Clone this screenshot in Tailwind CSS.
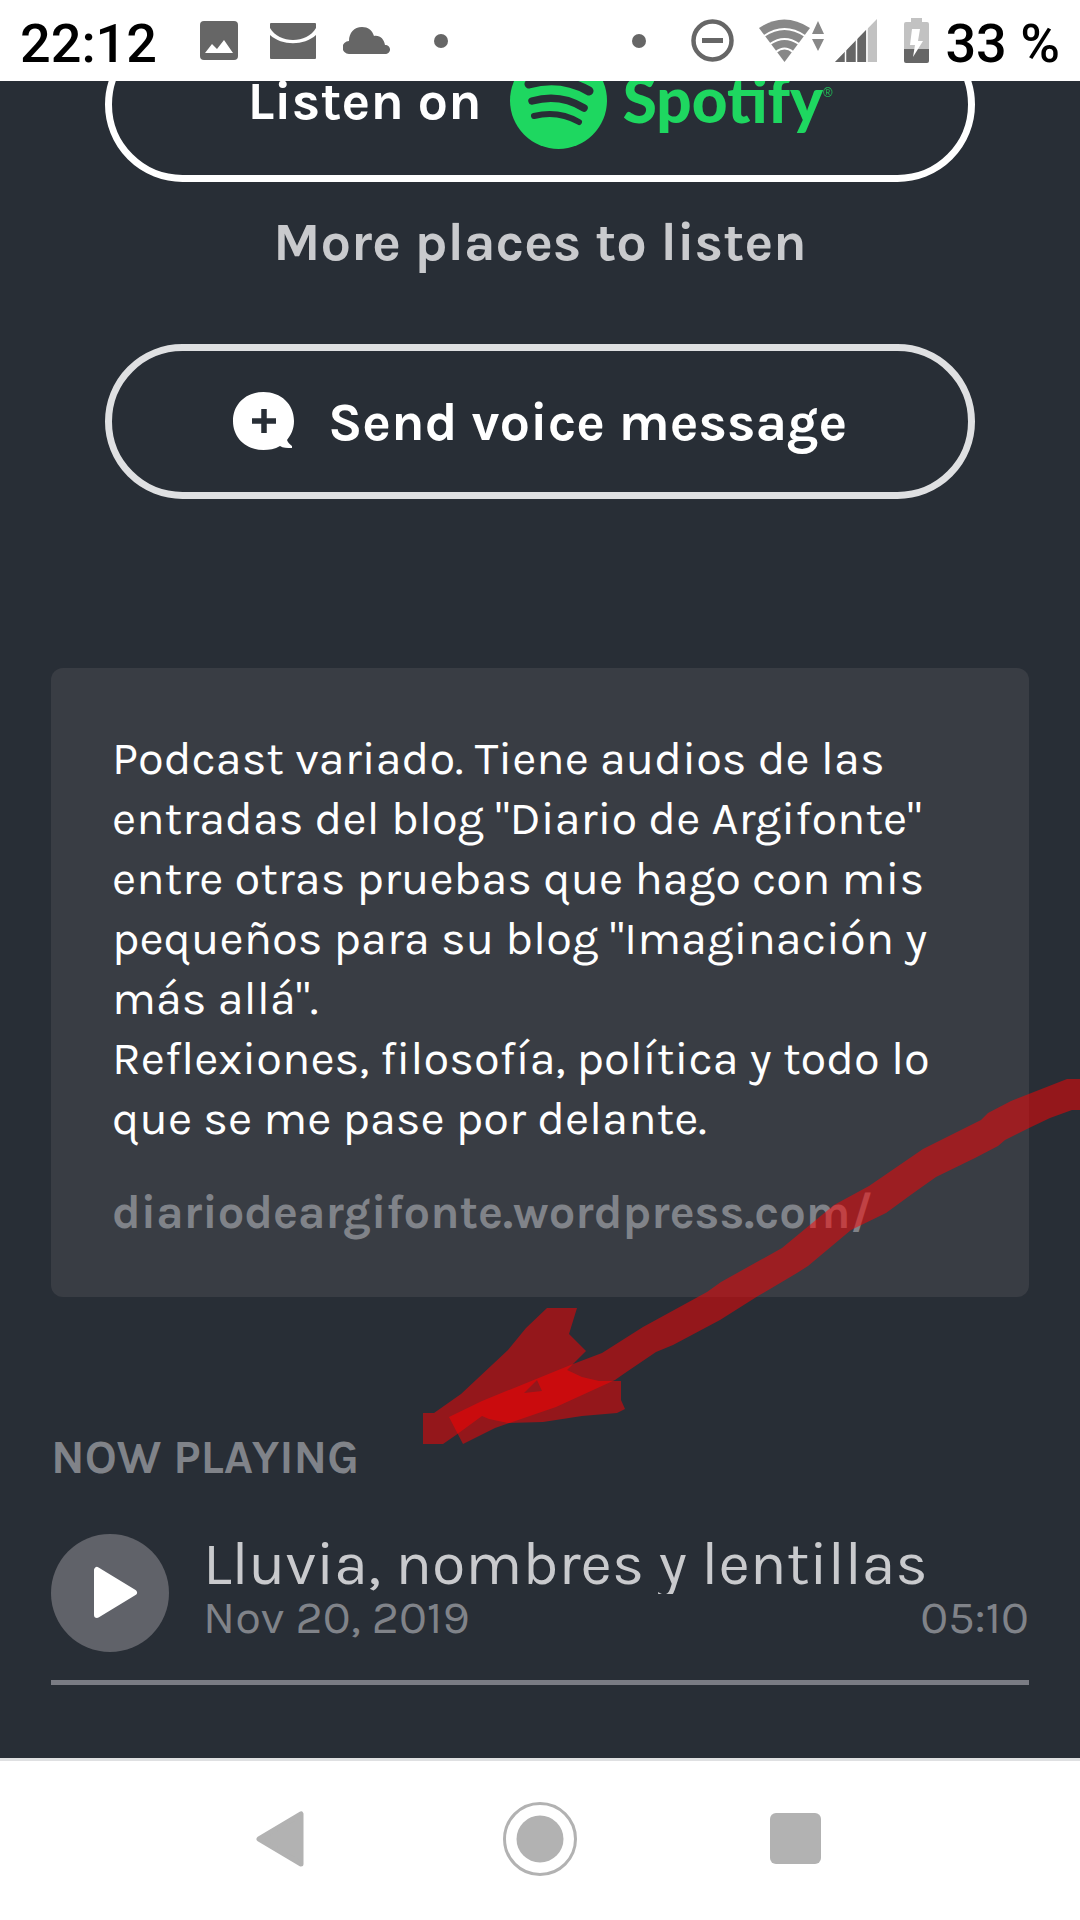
<!DOCTYPE html>
<html lang="es">
<head>
    <meta charset="UTF-8">
    <meta name="viewport" content="width=device-width, initial-scale=1.0">
    <title>Podcast</title>
    <script src="https://cdn.jsdelivr.net/npm/@tailwindcss/browser@4"></script>
</head>
<body class="min-h-screen flex flex-col bg-[#282e36] font-['Karla','Inter',sans-serif] text-white">
    <!-- Status bar -->
    <header class="h-[81px] bg-white text-black flex items-center justify-between px-5 font-['Roboto',sans-serif] font-medium text-[54px] leading-[72px]">
        <div class="flex items-center">
            <span class="pt-1.5">22:12</span>
            <svg class="ml-[43px] w-[38px] h-[40px]" viewBox="0 0 38 40">
                <rect width="38" height="39" rx="4" fill="#666"/>
                <path d="M5 32l7-9 5 5 7-9 9 13z" fill="#fff"/>
            </svg>
            <svg class="ml-8 w-[46px] h-[36px]" viewBox="0 0 46 36" fill="#666">
                <path d="M1 0h44q1 0 1 1v4C37 21 9 21 0 5V1q0-1 1-1z"/>
                <path d="M0 12c12 11 34 11 46 0v23q0 1-1 1H1q-1 0-1-1z"/>
            </svg>
            <svg class="ml-[27px] w-[47px] h-[28px]" viewBox="0 0 47 28" fill="#666">
                <path d="M6 27a6.500 6.500 0 0 1 0-13C6 6 11 0 19 0c6 0 10 3 12 9 6-1 10 3 11 9 3 0 5 2 5 4.500S45 27 42 27z"/>
            </svg>
            <span class="ml-11 size-3.5 rounded-full bg-[#666]"></span>
        </div>
        <div class="flex items-center">
            <span class="size-3.5 rounded-full bg-[#666]"></span>
            <svg class="ml-[45px] w-[43px] h-[43px]" viewBox="0 0 43 43" fill="none" stroke="#666">
                <circle cx="21.500" cy="21.500" r="19" stroke-width="4.500"/>
                <path d="M11 21.500h21" stroke-width="5"/>
            </svg>
            <svg class="ml-[25px] w-[66px] h-[44px]" viewBox="0 0 66 44">
                <path d="M0 9Q25-8 51 9L25.500 43z" fill="#888"/>
                <g fill="none" stroke="#fff" stroke-width="2">
                    <path d="M5 17q20.500-14 41 0M11 25q14.500-10 29 0M17 33q8.500-7 17 0"/>
                </g>
                <path d="M53 15h12L59 2zM53 20h12l-6 12z" fill="#888"/>
            </svg>
            <svg class="ml-2.5 w-[42px] h-[44px]" viewBox="0 0 42 44">
                <path d="M0 43L42 0v43z" fill="#c2c2c2"/>
                <path d="M0 43L31 11v32z" fill="#666"/>
                <path d="M10.500 25v18M21.500 15v28M32 5v38" stroke="#fff" stroke-width="1.500"/>
            </svg>
            <svg class="ml-[27px] w-[25px] h-[46px]" viewBox="0 0 25 46">
                <path d="M7 0h11v4h5q2 0 2 2v26H0V6q0-2 2-2h5z" fill="#c2c2c2"/>
                <path d="M0 31h25v12q0 2-2 2H2q-2 0-2-2z" fill="#666"/>
                <path d="M8 11h8l-2 12h5L9 39l2-12H6z" fill="#fff"/>
            </svg>
            <span class="ml-4 pt-1.5">33 %</span>
        </div>
    </header>

    <main class="relative flex-1 overflow-hidden px-[51px]">
        <div class="px-[54px] flex flex-col items-stretch">
            <a href="#" class="-mt-[54px] h-[155px] pb-2 rounded-full border-[7px] border-white flex items-center justify-center font-bold text-[54px] leading-[60px]">
                <span>Listen on</span>
                <svg class="ml-7 size-[97px]" viewBox="0 0 97 97">
                    <circle cx="48.500" cy="48.500" r="48.500" fill="#1ed760"/>
                    <g fill="none" stroke="#282e36" stroke-linecap="round">
                        <path d="M19 32q32-9 60 7" stroke-width="9"/>
                        <path d="M22 49q28-8 52 7" stroke-width="7.500"/>
                        <path d="M24 64q24-6 45 6" stroke-width="6"/>
                    </g>
                </svg>
                <span class="ml-4 font-['Lato',sans-serif] font-black text-[62px] leading-[58px] pb-1 text-[#1ed760]">Spotify</span>
                <span class="text-[14px] leading-5 font-normal text-[#1ed760] mb-4">®</span>
            </a>
            <a href="#" class="mt-[30px] text-center font-bold text-[54px] leading-[60px] text-[#c9cacd]">More places to listen</a>
            <button type="button" class="mt-[72px] h-[155px] rounded-full border-[7px] border-[#dfe0e2] flex items-center justify-center gap-[34px] font-bold text-[54px] leading-[60px]">
                <svg class="w-[61px] h-[60px]" viewBox="0 0 61 60">
                    <path d="M30.500 0C48 0 61 12 61 29c0 8-3 14-7 19 1 3 3 4 5 6v2c-5 0-9 0-12-2-5 3-11 4-16.500 4C13 58 0 46 0 29S13 0 30.500 0z" fill="#fff"/>
                    <path d="M31 17v24M19 29h24" stroke="#282e36" stroke-width="5.500"/>
                </svg>
                Send voice message
            </button>
        </div>

        <!-- Description -->
        <section class="mt-[169px] rounded-xl bg-[#393d44] px-[61px] pt-[61px] pb-[54px] text-[47px] leading-[60px] whitespace-nowrap">
            <p>
                Podcast variado. Tiene audios de las<br>
                entradas del blog "Diario de Argifonte"<br>
                entre otras pruebas que hago con mis<br>
                pequeños para su blog "Imaginación y<br>
                más allá".<br>
                Reflexiones, filosofía, política y todo lo<br>
                que se me pase por delante.
            </p>
            <a href="#" class="block mt-[34px] font-bold text-[#808389]">diariodeargifonte.wordpress.com/</a>
        </section>

        <!-- Player -->
        <section>
            <h2 class="mt-[131px] font-bold text-[47px] leading-[60px] text-[#808389]">NOW PLAYING</h2>
            <div class="mt-[46px] flex gap-[34px]">
                <button type="button" aria-label="Play" class="size-[118px] shrink-0 rounded-full bg-[#606269]">
                    <svg class="size-full" viewBox="0 0 118 118">
                        <path d="M46 36v45l37-22.500z" fill="#fff" stroke="#fff" stroke-width="6" stroke-linejoin="round"/>
                    </svg>
                </button>
                <div class="flex-1 min-w-0">
                    <p class="overflow-hidden whitespace-nowrap text-[61px] leading-[60px] text-[#c9cacd]">Lluvia, nombres y lentillas</p>
                    <div class="flex justify-between text-[47px] leading-[48px] text-[#808389]">
                        <span>Nov 20, 2019</span>
                        <span>05:10</span>
                    </div>
                </div>
            </div>
            <div class="mt-7 h-[5px] bg-[#7a7c84]"></div>
        </section>

        <!-- Hand-drawn arrow lying over the page -->
        <svg class="absolute right-0 top-[997px] w-[657px] h-[368px] pointer-events-none" viewBox="423 1078 657 368" fill="#ff0000" fill-opacity="0.5">
            <path d="M1080 1079H1067L1011 1101 988 1113 981 1120 923 1149 869 1186 834 1205 782 1248 721 1282 707 1292 643 1327 602 1353 573 1364 482 1401 449 1417 463 1444 495 1428 556 1407 615 1380 625 1373 656 1352 673 1345 720 1320 758 1296 797 1273 808 1266 851 1230 886 1213 912 1194 936 1177 975 1158 998 1146 1005 1140 1029 1128 1050 1118 1072 1110H1080z"/>
            <path fill-rule="evenodd" d="M423 1413H434L461 1394 508 1350 526 1328 547 1308H577L569 1334 586 1351 567 1370 582 1377 599 1381H621V1400L625 1409 617 1413 582 1416 543 1422 508 1423 489 1419 482 1416 456 1435 443 1444H423zM537 1380L524 1393 542 1391z"/>
        </svg>
    </main>

    <!-- Navigation bar -->
    <nav class="h-[162px] pb-1 bg-white border-t-[3px] border-[#dfe0e2] flex items-center justify-center gap-[169px]">
        <button type="button" aria-label="Back" class="w-[78px]">
            <svg class="w-[48px] h-[56px]" viewBox="0 0 48 56">
                <path d="M45 3v50L3 28z" fill="#b2b2b2" stroke="#b2b2b2" stroke-width="5" stroke-linejoin="round"/>
            </svg>
        </button>
        <button type="button" aria-label="Home">
            <svg class="size-[74px]" viewBox="0 0 74 74">
                <circle cx="37" cy="37" r="35.500" fill="none" stroke="#b2b2b2" stroke-width="3"/>
                <circle cx="37" cy="37" r="23.500" fill="#b2b2b2"/>
            </svg>
        </button>
        <button type="button" aria-label="Recent apps" class="w-[78px] pl-5 flex justify-center">
            <span class="size-[51px] rounded-md bg-[#b2b2b2]"></span>
        </button>
    </nav>
</body>
</html>
